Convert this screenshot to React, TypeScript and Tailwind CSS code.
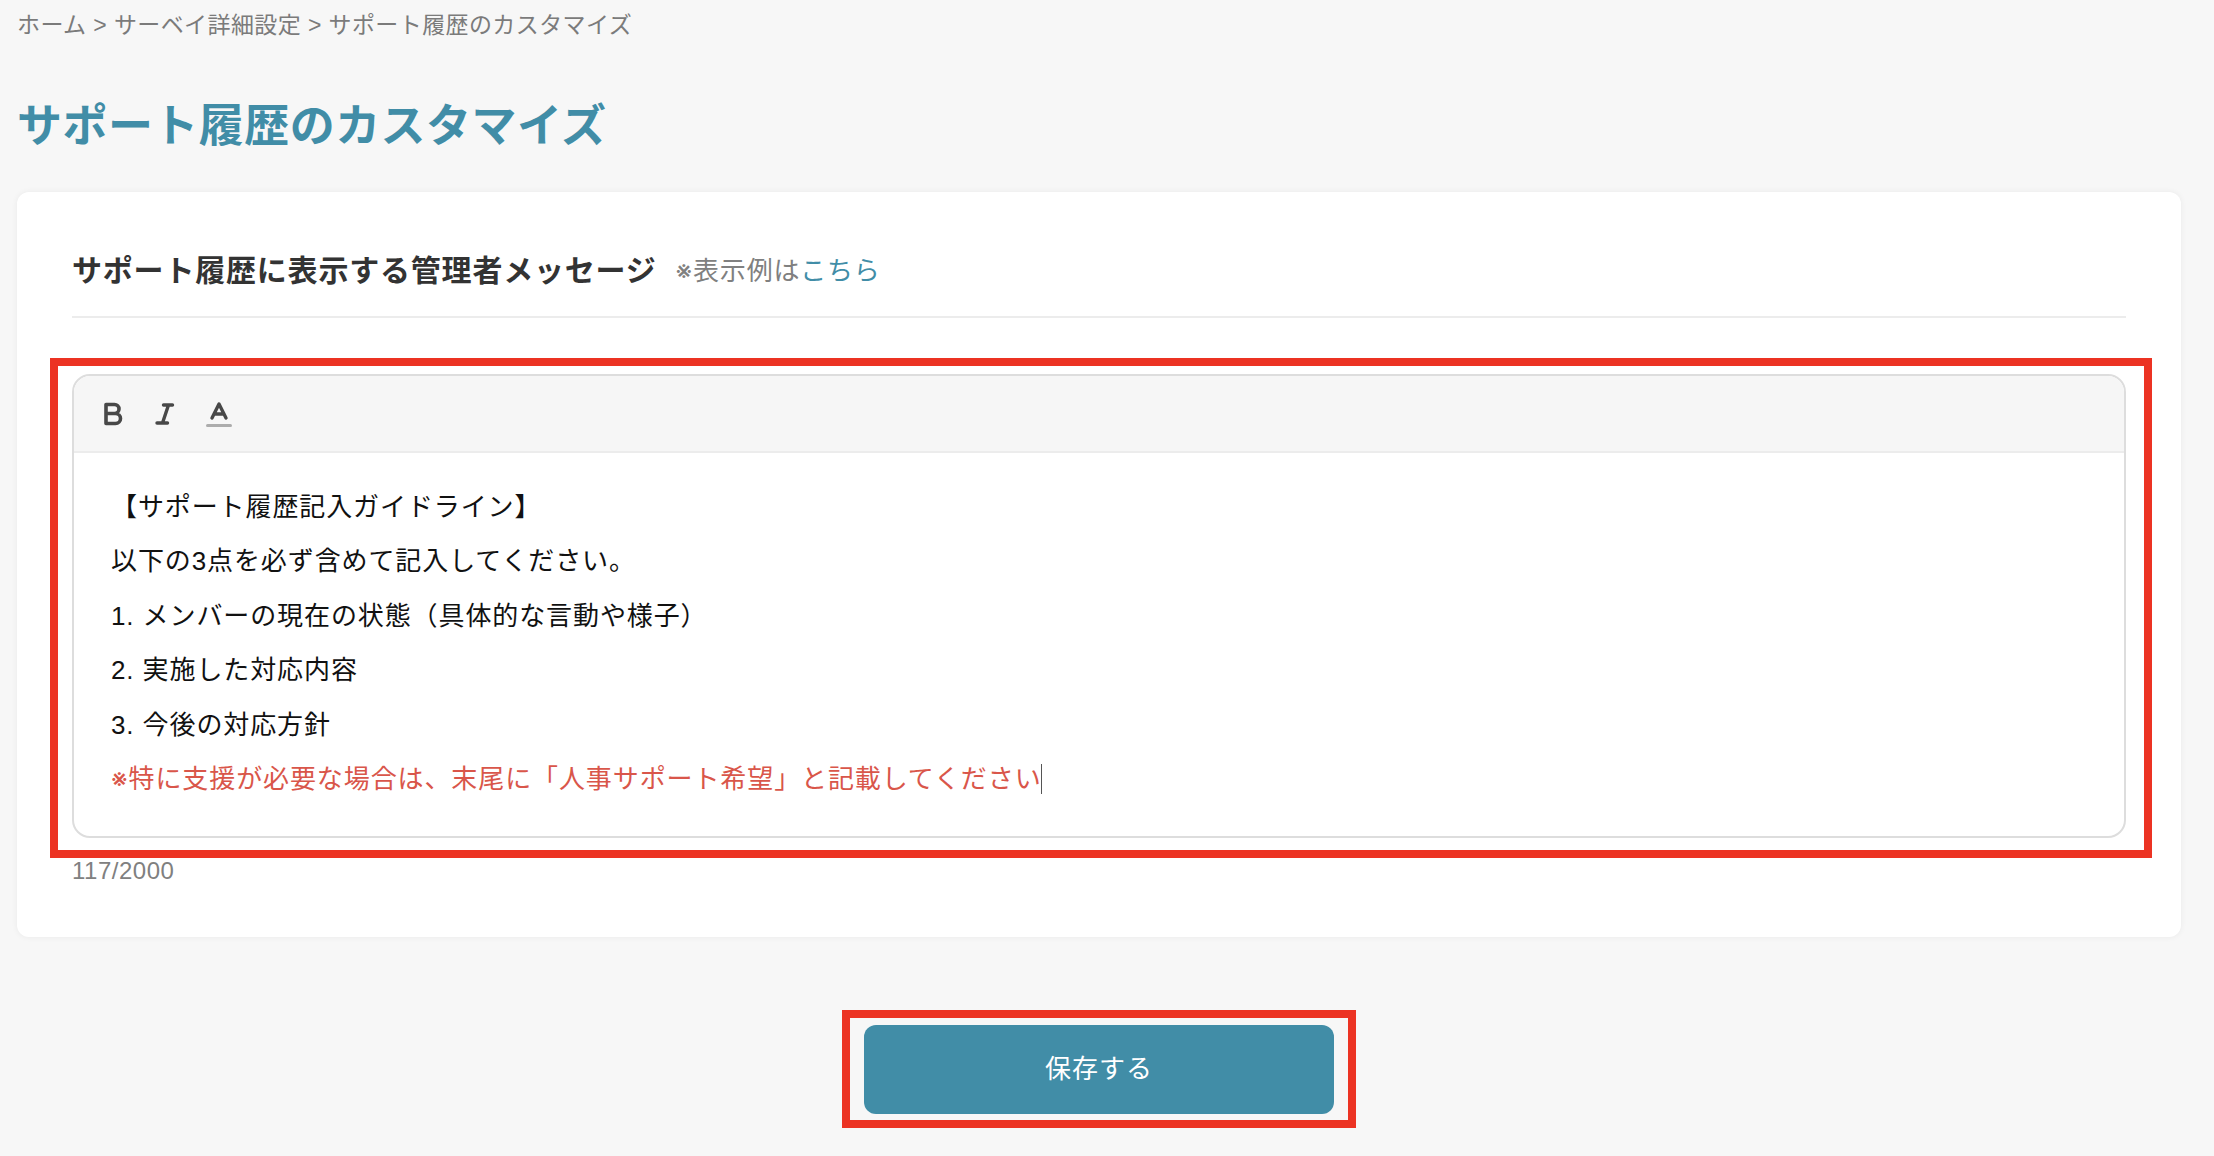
const bodyLines = [
  '【サポート履歴記入ガイドライン】',
  '以下の3点を必ず含めて記入してください。',
  '1. メンバーの現在の状態（具体的な言動や様子）',
  '2. 実施した対応内容',
  '3. 今後の対応方針',
];

function BoldIcon() {
  return (
    <svg width="20" height="24" viewBox="0 0 20 24" fill="none" stroke="#484848" strokeWidth="3.6" strokeLinejoin="round" strokeLinecap="round">
      <path d="M2 2.500h8.500a4.500 4.500 0 0 1 0 9H2zM2 11.500h9.500a5 5 0 0 1 0 10H2z" />
    </svg>
  );
}

function ItalicIcon() {
  return (
    <svg width="20" height="24" viewBox="0 0 20 24" fill="none" stroke="#484848" strokeWidth="3.4" strokeLinecap="round">
      <path d="M8.500 3h9M13.500 3L7.500 21M2 21h10.500" />
    </svg>
  );
}

function ColorIcon() {
  return (
    <svg width="26" height="28" viewBox="0 0 26 28" fill="none" strokeLinecap="round">
      <path d="M6 18L13 4l7 14M8.200 14h9.600" stroke="#484848" strokeWidth="3.4" strokeLinejoin="round" />
      <path d="M1.500 25.500h23" stroke="#acacac" strokeWidth="3" />
    </svg>
  );
}

export default function App() {
  return (
    <div className="h-[1156px] overflow-hidden bg-[#f7f7f7] px-[17px] font-['Liberation_Sans','Noto_Sans_CJK_JP',sans-serif]">
      <div className="pt-[10px] text-[23px] leading-[30px] tracking-[0.400px] text-[#7b7b7b]">
        ホーム &gt; サーベイ詳細設定 &gt; サポート履歴のカスタマイズ
      </div>

      <h1 className="mt-[57px] text-[45px] leading-[60px] font-bold tracking-[0.450px] text-[#418da7]">
        サポート履歴のカスタマイズ
      </h1>

      <div className="mt-[35px] h-[745px] w-[2164px] rounded-[12px] bg-white px-[55px] pt-[54px] shadow-[0_0_6px_rgba(0,0,0,0.06)]">
        <div className="flex h-[72px] items-start border-b-2 border-[#ececec]">
          <h2 className="mt-[1px] text-[30px] leading-[48px] font-bold tracking-[0.800px] text-[#333333]">
            サポート履歴に表示する管理者メッセージ
          </h2>
          <p className="mt-[1px] ml-[19px] text-[26px] leading-[48px] tracking-[0.800px] text-[#808080]">
            <span className="font-['Inter']">※</span>表示例は<span className="text-[#418da7]">こちら</span>
          </p>
        </div>

        <div className="relative mt-[56px] h-[464px] w-[2054px] rounded-[18px] border-2 border-[#dddddd]">
          <div className="flex h-[77px] items-center gap-[31px] rounded-t-[16px] border-b-2 border-[#ececec] bg-[#f6f6f6] pl-[30px]">
            <BoldIcon />
            <ItalicIcon />
            <ColorIcon />
          </div>
          <div className="pt-[27px] pl-[37px] text-[26px] leading-[54.400px] tracking-[0.900px] text-[#111111]">
            {bodyLines.map((line) => (
              <div key={line}>{line}</div>
            ))}
            <div className="text-[#d9564a]">
              <span className="font-['Inter']">※</span>特に支援が必要な場合は、末尾に「人事サポート希望」と記載してください
              <span className="ml-[-1px] inline-block h-[30px] w-[1.500px] translate-y-[6px] bg-[#555555]" />
            </div>
          </div>
          {/* 注釈の赤枠 */}
          <div className="absolute top-[-18px] left-[-24px] h-[500px] w-[2102px] border-8 border-[#ec3323]" />
        </div>

        <div className="mt-[17px] text-[24px] leading-[32px] tracking-[0.500px] text-[#808080]">117/2000</div>
      </div>

      <div className="relative mt-[88px] ml-[847px] flex h-[89px] w-[470px] items-center justify-center rounded-[12px] bg-[#418da7] text-[26px] tracking-[1px] text-white">
        保存する
        <div className="absolute top-[-15px] left-[-22px] h-[118px] w-[514px] border-8 border-[#ec3323]" />
      </div>
    </div>
  );
}
